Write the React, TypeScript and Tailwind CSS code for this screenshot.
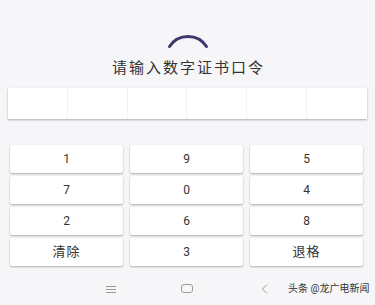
import React from "react";

const keys = ["1", "9", "5", "7", "0", "4", "2", "6", "8", "清除", "3", "退格"];

export default function App() {
  return (
    <div
      className="w-[375px] h-[305px] bg-[#f6f6f8] flex flex-col items-center overflow-hidden relative"
      style={{ fontFamily: 'Roboto, "Noto Sans CJK SC", sans-serif' }}
    >
      <svg width="44" height="16" viewBox="0 0 44 16" className="mt-[33px]">
        <path d="M3.5 13.5 A 22 22 0 0 1 40.5 13.5" fill="none" stroke="#3d386e" strokeWidth="3" strokeLinecap="round" />
      </svg>
      <div className="mt-[9px] h-[20px] leading-[20px] text-[15px] tracking-[2px] text-[#333] pl-[2px]">
        请输入数字证书口令
      </div>
      <div className="mt-[10px] w-[359px] h-[31px] bg-white shadow-[0_1px_2px_rgba(0,0,0,0.3)] grid grid-cols-6">
        {[0, 1, 2, 3, 4, 5].map((i) => (
          <div key={i} className={i < 5 ? "border-r border-[#f3f3f3]" : ""} />
        ))}
      </div>
      <div className="mt-[26px] w-[353px] grid grid-cols-3 gap-x-[7px] gap-y-[3px] ml-[-2px]">
        {keys.map((k) => (
          <div
            key={k}
            className="h-[28px] bg-white rounded-[2px] shadow-[0_1px_2px_rgba(0,0,0,0.3)] flex items-center justify-center text-[12px] text-[#333]"
          >
            <span className={k.length > 1 ? "text-[13px] tracking-[1px]" : ""}>{k}</span>
          </div>
        ))}
      </div>
      <div className="mt-auto mb-[9px] w-full h-[14px] flex items-center relative">
        <div className="absolute left-[106px] top-[4px] flex flex-col gap-[2px]">
          <div className="w-[10px] h-[1px] bg-[#9a9a9a]" />
          <div className="w-[10px] h-[1px] bg-[#9a9a9a]" />
          <div className="w-[10px] h-[1px] bg-[#9a9a9a]" />
        </div>
        <div className="absolute left-[181px] top-[2px] w-[12px] h-[9px] border border-[#9a9a9a] rounded-[3px]" />
        <svg className="absolute left-[261px] top-[1px]" width="8" height="12" viewBox="0 0 8 12">
          <path d="M6 1.5 L1.5 6 L6 10.5" fill="none" stroke="#9a9a9a" strokeWidth="1" />
        </svg>
        <div className="absolute left-[288px] top-[0px] text-[10px] leading-[14px] text-[#333] whitespace-nowrap">
          头条 @龙广电新闻
        </div>
      </div>
    </div>
  );
}
